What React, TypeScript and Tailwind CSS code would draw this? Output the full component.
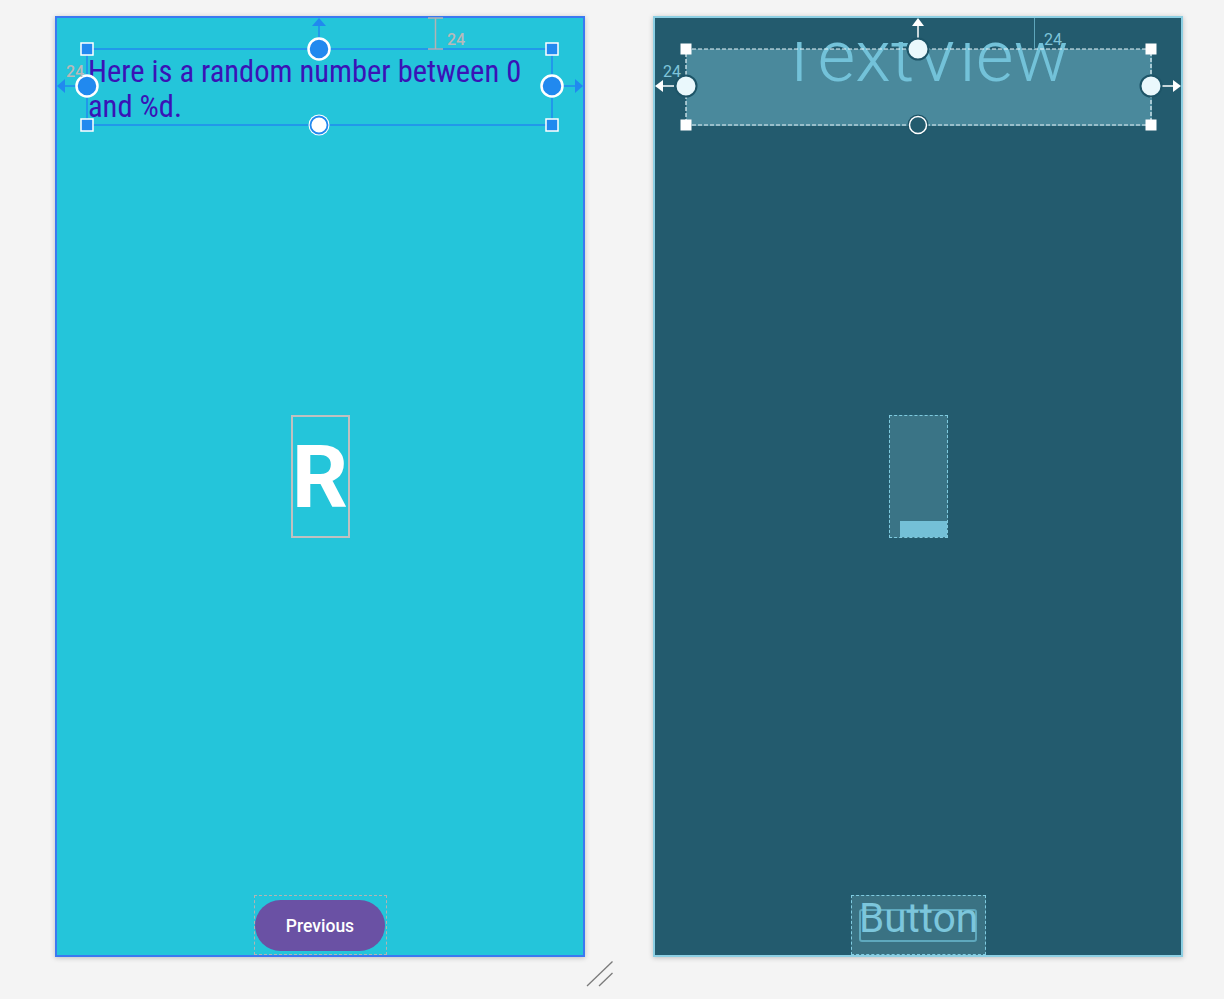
import React from "react";

const BLUE = "#2189ef";

function DesignOverlay() {
  return (
    <svg
      className="pointer-events-none absolute left-[-2px] top-[-2px] h-[941px] w-[530px]"
      viewBox="0 0 530 941"
    >
      <rect x="32" y="33" width="465" height="76" fill="none" stroke={BLUE} strokeWidth="1.5" />
      {/* constraint arrows */}
      <line x1="264" y1="22" x2="264" y2="9" stroke={BLUE} strokeWidth="1.5" />
      <polygon points="257,10 271,10 264,2" fill={BLUE} />
      <line x1="21" y1="70" x2="9" y2="70" stroke={BLUE} strokeWidth="1.5" />
      <polygon points="10,63 10,77 2,70" fill={BLUE} />
      <line x1="508" y1="70" x2="521" y2="70" stroke={BLUE} strokeWidth="1.5" />
      <polygon points="520,63 520,77 528,70" fill={BLUE} />
      {/* margin marker */}
      <line x1="380.5" y1="2" x2="380.5" y2="33" stroke="#b3b3b3" strokeWidth="1.5" />
      <line x1="373" y1="2" x2="388" y2="2" stroke="#b3b3b3" strokeWidth="1.5" />
      <line x1="373" y1="33" x2="388" y2="33" stroke="#b3b3b3" strokeWidth="1.5" />
      {/* resize handles */}
      {[
        [32, 33],
        [497, 33],
        [32, 109],
        [497, 109],
      ].map(([x, y]) => (
        <rect key={`${x}-${y}`} x={x - 6} y={y - 6} width="12" height="12" fill={BLUE} stroke="#ffffff" strokeWidth="1.5" />
      ))}
      {[
        [264, 33],
        [32, 70],
        [497, 70],
      ].map(([x, y]) => (
        <circle key={`${x}-${y}`} cx={x} cy={y} r="10.5" fill={BLUE} stroke="#ffffff" strokeWidth="2.5" />
      ))}
      <circle cx="264" cy="109" r="10.5" fill="#ffffff" />
      <circle cx="264" cy="109" r="8.5" fill="#ffffff" stroke={BLUE} strokeWidth="1.8" />
    </svg>
  );
}

function BlueprintOverlay() {
  const dark = "#1d5467";
  return (
    <svg
      className="pointer-events-none absolute left-[-2px] top-[-2px] h-[941px] w-[530px]"
      viewBox="0 0 530 941"
    >
      <rect x="33" y="33" width="465" height="76" fill="none" stroke="#e6f4f8" strokeWidth="1.2" strokeDasharray="4 2" />
      <line x1="381.5" y1="2" x2="381.5" y2="33" stroke="#5ea6bb" strokeWidth="1" />
      <line x1="265" y1="22" x2="265" y2="9" stroke="#ffffff" strokeWidth="1.5" />
      <polygon points="259,10 271,10 265,2" fill="#ffffff" />
      <line x1="21" y1="70" x2="9" y2="70" stroke="#ffffff" strokeWidth="1.5" />
      <polygon points="10,64 10,76 2,70" fill="#ffffff" />
      <line x1="509" y1="70" x2="521" y2="70" stroke="#ffffff" strokeWidth="1.5" />
      <polygon points="520,64 520,76 528,70" fill="#ffffff" />
      {[
        [33, 33],
        [498, 33],
        [33, 109],
        [498, 109],
      ].map(([x, y]) => (
        <rect key={`${x}-${y}`} x={x - 5.5} y={y - 5.5} width="11" height="11" fill="#ffffff" />
      ))}
      {[
        [265, 33],
        [33, 70],
        [498, 70],
      ].map(([x, y]) => (
        <circle key={`${x}-${y}`} cx={x} cy={y} r="10.5" fill="#eaf8fc" stroke={dark} strokeWidth="2" />
      ))}
      <circle cx="265" cy="109" r="10.5" fill={dark} />
      <circle cx="265" cy="109" r="8.5" fill="#235b6e" stroke="#ffffff" strokeWidth="1.5" />
    </svg>
  );
}

function DesignPanel() {
  return (
    <div className="relative flex h-[941px] w-[530px] flex-col items-center border-2 border-[#3b79f1] bg-[#24c5da] shadow-[0_1px_5px_rgba(0,0,0,0.22)]">
      <div className="mt-[31px] ml-[30px] h-[77px] w-[466px] self-start pl-[1px] pt-[5px] font-['Roboto_Condensed','Roboto',sans-serif] text-[30.5px] leading-[35px] text-[#3a13b6] [font-stretch:75%]">
        <div className="whitespace-nowrap">Here is a random number between 0</div>
        <div className="whitespace-nowrap">and %d.</div>
      </div>
      <div className="mt-[289px] flex h-[123px] w-[59px] items-center justify-center border-2 border-[#c0c0c0]">
        <span className="font-['Roboto',sans-serif] text-[88px] font-bold leading-none text-white">R</span>
      </div>
      <div className="flex-1" />
      <div className="flex h-[60px] w-[133px] justify-center border border-dashed border-[#b3b3b3] pt-[4px]">
        <div className="flex h-[51px] w-[130px] items-center justify-center rounded-full bg-[#6a51a4] pt-[2px] font-['Roboto',sans-serif] text-[17.5px] font-medium text-white">
          Previous
        </div>
      </div>
      <DesignOverlay />
      <span className="absolute left-[9px] top-[42px] font-['Roboto',sans-serif] text-[16px] font-medium text-[#b9b9b9]">24</span>
      <span className="absolute left-[390px] top-[10px] font-['Roboto',sans-serif] text-[16px] font-medium text-[#b9b9b9]">24</span>
    </div>
  );
}

function BlueprintPanel() {
  return (
    <div className="relative flex h-[941px] w-[530px] flex-col items-center border-2 border-[#8ccfe3] bg-[#235b6e] shadow-[0_1px_5px_rgba(0,0,0,0.22)]">
      <div className="relative mt-[31px] ml-[31px] h-[77px] w-[466px] self-start bg-[#4a899c]">
        <div className="absolute inset-x-0 top-[-7px] bottom-0 flex justify-center overflow-hidden">
          <span className="mt-[-22px] whitespace-nowrap pl-[8px] font-['Roboto',sans-serif] text-[73px] font-light leading-none text-[#73c2d9]">
            TextView
          </span>
        </div>
      </div>
      <div className="mt-[289px] flex h-[123px] w-[59px] flex-col justify-end border border-dashed border-[#7fcbe0] bg-[#3a7486]">
        <div className="ml-[10px] h-[16px] bg-[#74c0d7]" />
      </div>
      <div className="flex-1" />
      <div className="flex h-[60px] w-[135px] justify-center border border-dashed border-[#7fcbe0] bg-[#3a7283] pt-[13px]">
        <div className="relative h-[33px] w-[118px] rounded-[3px] border-2 border-[#5ea8bd]">
          <span className="absolute left-[-2px] top-[-13px] font-['Roboto',sans-serif] text-[40.5px] leading-none text-[#7cc6dc]">
            Button
          </span>
        </div>
      </div>
      <BlueprintOverlay />
      <span className="absolute left-[8px] top-[42px] font-['Roboto',sans-serif] text-[16px] text-[#7fc5da]">24</span>
      <span className="absolute left-[389px] top-[10px] font-['Roboto',sans-serif] text-[16px] text-[#7fc5da]">24</span>
    </div>
  );
}

export default function App() {
  return (
    <div className="relative flex h-[999px] w-[1224px] gap-[68px] bg-[#f4f4f4] pl-[55px] pt-[16px]">
      <DesignPanel />
      <BlueprintPanel />
      <svg className="absolute left-[585px] top-[960px] h-[30px] w-[30px]" viewBox="0 0 30 30">
        <line x1="2" y1="26" x2="27.5" y2="1.5" stroke="#7a7a7a" strokeWidth="1.3" />
        <line x1="14" y1="26" x2="27.5" y2="13" stroke="#7a7a7a" strokeWidth="1.3" />
      </svg>
    </div>
  );
}
